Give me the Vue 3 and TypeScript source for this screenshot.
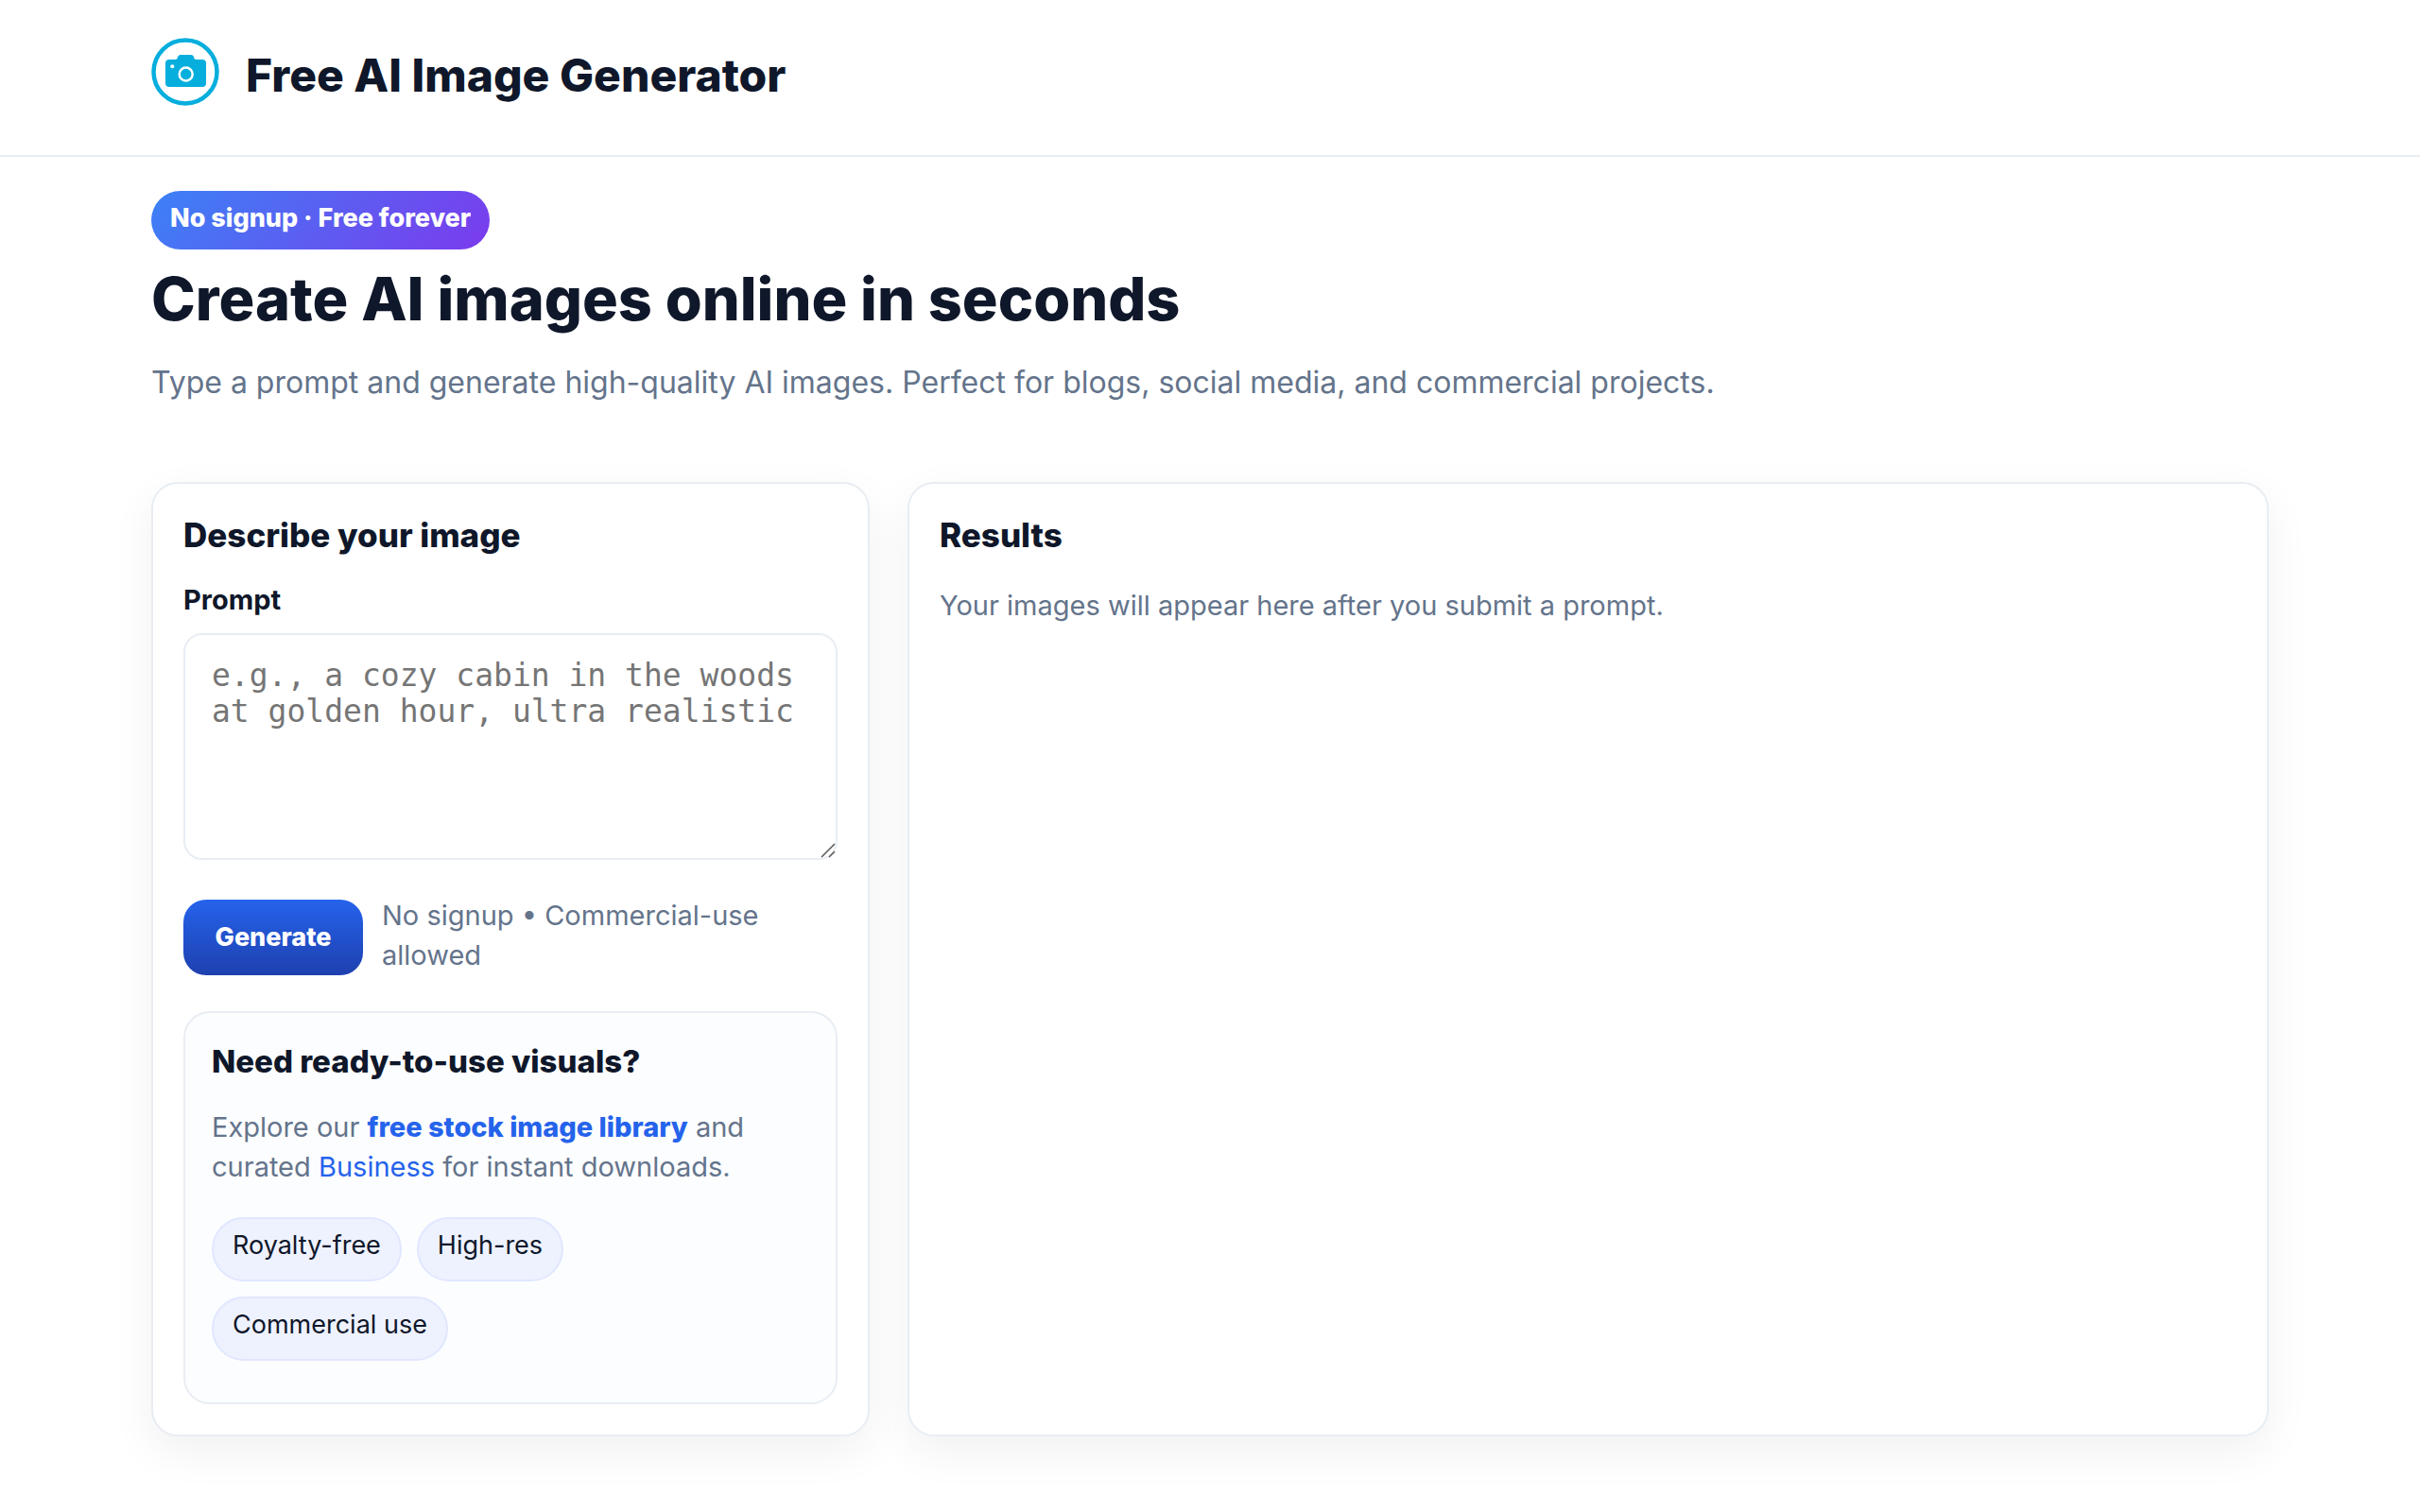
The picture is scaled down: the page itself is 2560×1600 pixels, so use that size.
<script setup lang="ts">
import { ref } from 'vue'

const prompt = ref('')
const tags: string[] = ['Royalty-free', 'High-res', 'Commercial use']
</script>

<template>
  <div class="page">
    <header class="site-header">
      <div class="wrap brand">
        <svg class="logo" viewBox="0 0 72 72" role="img" aria-label="Camera logo">
          <circle cx="36" cy="36" r="33.500" fill="none" stroke="#06aedd" stroke-width="4.500" />
          <path
            fill="#06aedd"
            d="M19 23h6q3 0 3-3 1-2 3-2h11q2 0 3 2 0 3 3 3h6q4 0 4 4v21q0 4-4 4H19q-4 0-4-4V27q0-4 4-4z"
          />
          <circle cx="36.700" cy="38.500" r="7" fill="none" stroke="#fff" stroke-width="2.500" />
          <circle cx="22.300" cy="30.300" r="2" fill="#fff" />
        </svg>
        <div class="site-title">Free AI Image Generator</div>
      </div>
    </header>

    <main class="wrap">
      <section class="hero">
        <span class="badge">No signup · Free forever</span>
        <h1>Create AI images online in seconds</h1>
        <p>Type a prompt and generate high-quality AI images. Perfect for blogs, social media, and commercial projects.</p>
      </section>

      <div class="columns">
        <section class="card">
          <h2>Describe your image</h2>
          <form @submit.prevent>
            <label for="prompt">Prompt</label>
            <div class="field">
              <textarea
                id="prompt"
                v-model="prompt"
                placeholder="e.g., a cozy cabin in the woods at golden hour, ultra realistic"
              ></textarea>
              <svg class="grip" viewBox="0 0 16 16" aria-hidden="true">
                <path d="M1 15L15 1M9 15l6-6" fill="none" stroke="#555" stroke-width="1.500" />
              </svg>
            </div>
            <div class="actions">
              <button type="submit">Generate</button>
              <span class="muted note">No signup • Commercial-use allowed</span>
            </div>
          </form>
          <aside class="promo">
            <h3>Need ready-to-use visuals?</h3>
            <p class="muted">
              Explore our <a href="#library"><strong>free stock image library</strong></a> and curated
              <a href="#business">Business</a> for instant downloads.
            </p>
            <ul class="tags">
              <li v-for="tag in tags" :key="tag">{{ tag }}</li>
            </ul>
          </aside>
        </section>

        <section class="card">
          <h2>Results</h2>
          <p class="muted results">Your images will appear here after you submit a prompt.</p>
        </section>
      </div>
    </main>
  </div>
</template>

<style>
body {
  margin: 0;
  background: #fff;
}
</style>

<style scoped>
.page {
  font-family: Inter, "Liberation Sans", sans-serif;
  font-size: 29px;
  line-height: 42px;
  color: #0f172a;
}
.page * {
  box-sizing: border-box;
}
h1,
h2,
h3,
p,
ul {
  margin: 0;
}
.wrap {
  max-width: 2240px;
  margin: 0 auto;
}
.site-header {
  border-bottom: 2px solid #e8edf3;
}
.brand {
  display: flex;
  align-items: flex-start;
  gap: 28px;
  padding: 40px 0 48px;
}
.logo {
  width: 72px;
  height: 72px;
}
.site-title {
  font-size: 48px;
  line-height: 72px;
  font-weight: 800;
  padding-top: 4px;
}
.hero {
  padding: 36px 0 80px;
}
.badge {
  display: block;
  width: fit-content;
  padding: 8px 20px 12px;
  border-radius: 32px;
  background: linear-gradient(135deg, #3b82f6, #7c3aed);
  color: #fff;
  font-size: 27px;
  font-weight: 800;
}
h1 {
  margin: 16px 0 28px;
  font-size: 63px;
  line-height: 72px;
  font-weight: 800;
}
.hero p {
  font-size: 32px;
  line-height: 50px;
  color: #64748b;
}
.columns {
  display: grid;
  grid-template-columns: 19fr 36fr;
  gap: 40px;
  padding-bottom: 80px;
}
.card {
  padding: 32px;
  border: 2px solid #e8edf3;
  border-radius: 28px;
  background: #fff;
  box-shadow: 0 16px 48px rgba(0, 0, 0, 0.06);
}
h2 {
  font-size: 35px;
  line-height: 44px;
  font-weight: 800;
}
label {
  display: block;
  margin: 26px 0 14px;
  font-weight: 700;
}
.field {
  position: relative;
}
textarea {
  display: block;
  width: 100%;
  height: 240px;
  padding: 24px 28px;
  border: 2px solid #e8edf3;
  border-radius: 20px;
  background: #fff;
  font-family: "DejaVu Sans Mono", monospace;
  font-size: 33px;
  line-height: 38px;
  color: #0f172a;
  resize: none;
}
textarea::placeholder {
  color: #757575;
}
.grip {
  position: absolute;
  right: 2px;
  bottom: 2px;
  width: 16px;
  height: 16px;
}
.actions {
  display: flex;
  align-items: center;
  gap: 20px;
  margin: 38px 0 34px;
}
button {
  flex: none;
  min-width: 190px;
  height: 80px;
  padding: 0 32px 2px;
  border: 0;
  border-radius: 24px;
  background: linear-gradient(180deg, #2563eb, #1e40af);
  color: #fff;
  font-family: inherit;
  font-size: 27px;
  font-weight: 800;
}
.muted {
  color: #64748b;
}
.note {
  padding-bottom: 4px;
}
.results {
  margin-top: 32px;
}
.promo {
  padding: 30px 28px 44px;
  border: 2px solid #e8edf3;
  border-radius: 28px;
  background: #fcfdff;
}
h3 {
  margin-bottom: 28px;
  font-size: 33px;
  line-height: 42px;
  font-weight: 800;
}
a {
  color: #2563eb;
  text-decoration: none;
}
strong {
  font-weight: 800;
}
.tags {
  display: flex;
  flex-wrap: wrap;
  gap: 16px;
  margin-top: 32px;
  padding: 0;
  list-style: none;
}
.tags li {
  padding: 8px 20px 16px;
  border: 2px solid #e0e7ff;
  border-radius: 34px;
  background: #eef2ff;
  font-size: 27px;
  line-height: 40px;
}
</style>
